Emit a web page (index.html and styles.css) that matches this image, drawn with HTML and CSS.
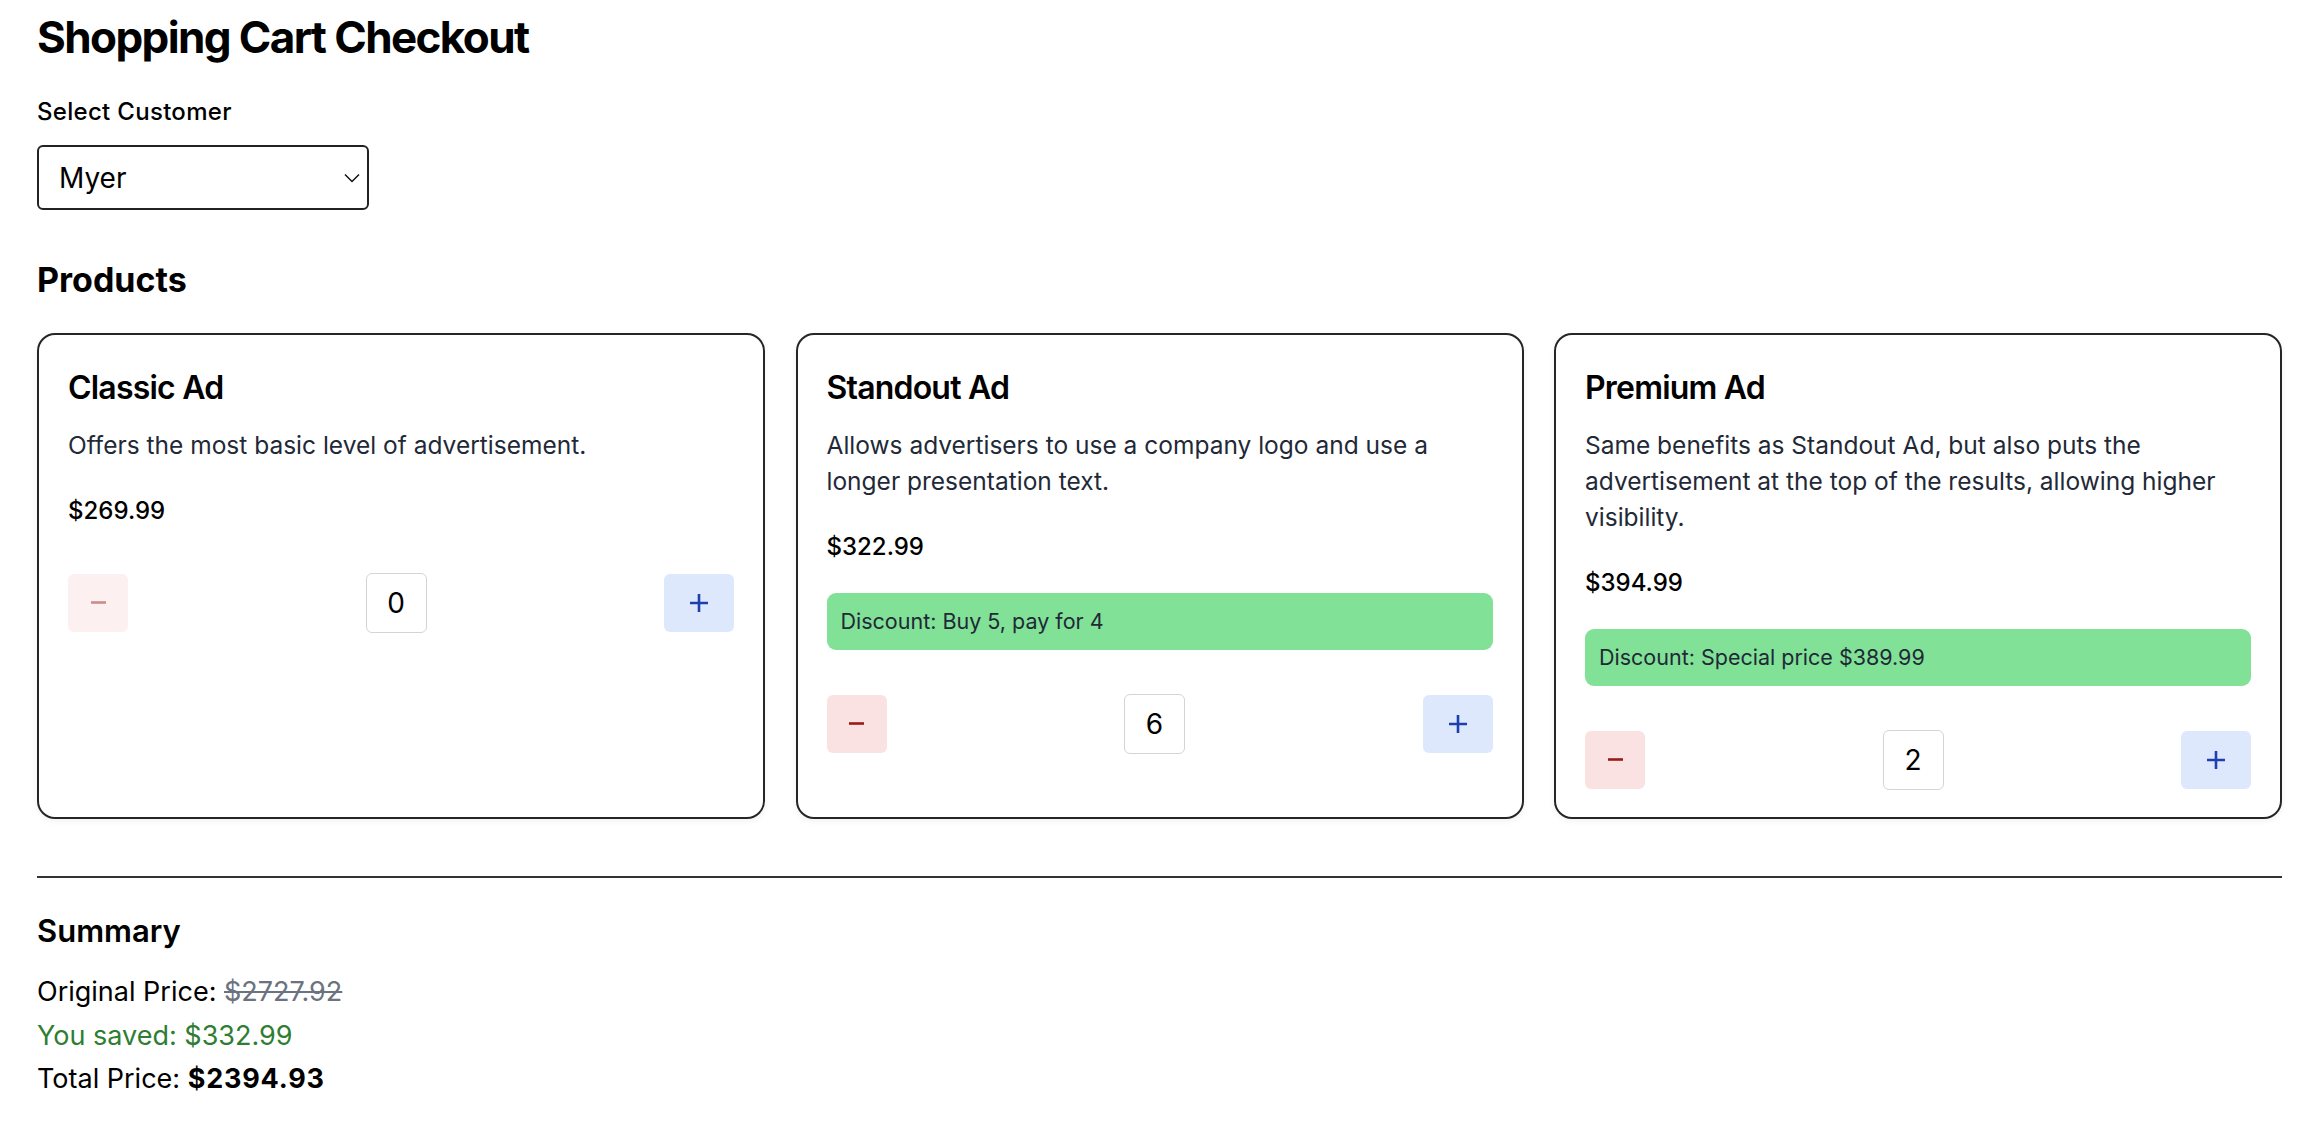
FILE: index.html
```html
<!DOCTYPE html>
<html lang="en">
<head>
    <meta charset="UTF-8">
    <meta name="viewport" content="width=device-width, initial-scale=1.0">
    <title>Shopping Cart Checkout</title>
    <link rel="stylesheet" href="styles.css">
</head>
<body>

    <div class="page">
        <h1>Shopping Cart Checkout</h1>

        <label class="field-label" for="customer">Select Customer</label>
        <div class="select-wrap">
            <select id="customer">
                <option>Default</option>
                <option selected>Myer</option>
                <option>SecondBite</option>
                <option>Axil Coffee Roasters</option>
            </select>
            <svg class="chevron" width="16" height="10" viewBox="0 0 16 10"><path d="M1 1.5 L8 8.5 L15 1.5" fill="none" stroke="#111" stroke-width="1.5"/></svg>
        </div>

        <h2>Products</h2>

        <div class="products">
            <div class="card">
                <h3>Classic Ad</h3>
                <p class="desc">Offers the most basic level of advertisement.</p>
                <p class="price">$269.99</p>
                <div class="qty-row">
                    <button class="btn-minus" disabled><svg width="15" height="15" viewBox="0 0 15 15"><path d="M0 7.5h15" stroke="currentColor" stroke-width="2.6"/></svg></button>
                    <span class="qty">0</span>
                    <button class="btn-plus"><svg width="18" height="18" viewBox="0 0 18 18"><path d="M0 9h18M9 0v18" stroke="currentColor" stroke-width="2.6"/></svg></button>
                </div>
            </div>

            <div class="card">
                <h3>Standout Ad</h3>
                <p class="desc">Allows advertisers to use a company logo and use a longer presentation text.</p>
                <p class="price">$322.99</p>
                <div class="discount">Discount: Buy 5, pay for 4</div>
                <div class="qty-row">
                    <button class="btn-minus"><svg width="15" height="15" viewBox="0 0 15 15"><path d="M0 7.5h15" stroke="currentColor" stroke-width="2.6"/></svg></button>
                    <span class="qty">6</span>
                    <button class="btn-plus"><svg width="18" height="18" viewBox="0 0 18 18"><path d="M0 9h18M9 0v18" stroke="currentColor" stroke-width="2.6"/></svg></button>
                </div>
            </div>

            <div class="card">
                <h3>Premium Ad</h3>
                <p class="desc">Same benefits as Standout Ad, but also puts the advertisement at the top of the results, allowing higher visibility.</p>
                <p class="price">$394.99</p>
                <div class="discount">Discount: Special price $389.99</div>
                <div class="qty-row">
                    <button class="btn-minus"><svg width="15" height="15" viewBox="0 0 15 15"><path d="M0 7.5h15" stroke="currentColor" stroke-width="2.6"/></svg></button>
                    <span class="qty">2</span>
                    <button class="btn-plus"><svg width="18" height="18" viewBox="0 0 18 18"><path d="M0 9h18M9 0v18" stroke="currentColor" stroke-width="2.6"/></svg></button>
                </div>
            </div>
        </div>

        <hr>

        <div class="summary">
            <h2 class="summary-title">Summary</h2>
            <p>Original Price: <span class="old-price">$2727.92</span></p>
            <p class="saved">You saved: $332.99</p>
            <p>Total Price: <strong>$2394.93</strong></p>
        </div>
    </div>

</body>
</html>
```

FILE: styles.css
```css
body {
    margin: 0;
    font-family: Inter, "Liberation Sans", sans-serif;
    color: #000;
    background: #fff;
}
.page {
    padding: 10px 30px 30px 37px;
}
h1 {
    margin: 0;
    font-size: 44px;
    line-height: 54px;
    font-weight: 700;
    letter-spacing: -1.6px;
}
.field-label {
    display: block;
    margin-top: 30px;
    font-size: 24px;
    line-height: 36px;
    font-weight: 500;
    letter-spacing: 0.3px;
}
.select-wrap {
    position: relative;
    width: 332px;
    margin-top: 15px;
}
select {
    appearance: none;
    -webkit-appearance: none;
    display: block;
    width: 100%;
    height: 65px;
    padding: 0 40px 0 20px;
    border: 2px solid #222;
    border-radius: 6px;
    background: #fff;
    font-family: Inter, "Liberation Sans", sans-serif;
    font-size: 28px;
    color: #000;
}
.chevron {
    position: absolute;
    right: 9px;
    top: 28px;
    pointer-events: none;
}
h2 {
    margin: 47px 0 0;
    font-size: 34px;
    line-height: 45px;
    font-weight: 700;
}
.products {
    display: grid;
    grid-template-columns: repeat(3, 1fr);
    gap: 30.5px;
    margin-top: 31px;
}
.card {
    border: 2px solid #262626;
    border-radius: 18px;
    padding: 30px 29px 27px;
    box-shadow: 0 2px 6px rgba(0,0,0,0.06);
}
.card h3 {
    margin: 0;
    font-size: 32px;
    line-height: 45px;
    font-weight: 600;
    letter-spacing: -0.8px;
}
.desc {
    margin: 17px 0 0;
    font-size: 24.5px;
    line-height: 36px;
    color: #1f2937;
}
.price {
    margin: 30px 0 0;
    font-size: 24px;
    line-height: 36px;
    font-weight: 500;
}
.discount {
    margin-top: 28px;
    padding: 12px 14px;
    background-color: #81e196;
    border-radius: 9px;
    font-size: 21.5px;
    line-height: 33px;
    color: #1f2937;
}
.qty-row {
    display: flex;
    justify-content: space-between;
    align-items: center;
    margin-top: 43.5px;
}
.qty-row button {
    display: flex;
    align-items: center;
    justify-content: center;
    padding: 0;
    border: none;
    border-radius: 6px;
    height: 58px;
    cursor: pointer;
}
.btn-minus {
    width: 60px;
    background-color: #fae2e2;
    color: #991b1b;
}
.btn-minus:disabled {
    opacity: 0.5;
    cursor: not-allowed;
}
.btn-plus {
    width: 70px;
    background-color: #dde8fc;
    color: #1e40af;
}
.qty {
    box-sizing: border-box;
    width: 61px;
    height: 60px;
    border: 1px solid #d1d5db;
    border-radius: 6px;
    display: flex;
    align-items: center;
    justify-content: center;
    font-size: 28px;
}
hr {
    margin: 57px 0 0;
    border: none;
    border-top: 2px solid #333;
}
.summary-title {
    margin: 32px 0 0;
    font-size: 31px;
    line-height: 42px;
    font-weight: 600;
}
.summary p {
    margin: 0;
    font-size: 27px;
    line-height: 43.5px;
}
.summary-title + p {
    margin-top: 18.5px;
}
.summary strong {
    letter-spacing: 0.8px;
}
.old-price {
    color: #6b7280;
    text-decoration: line-through;
}
.saved {
    color: #2e7d32;
}
```
